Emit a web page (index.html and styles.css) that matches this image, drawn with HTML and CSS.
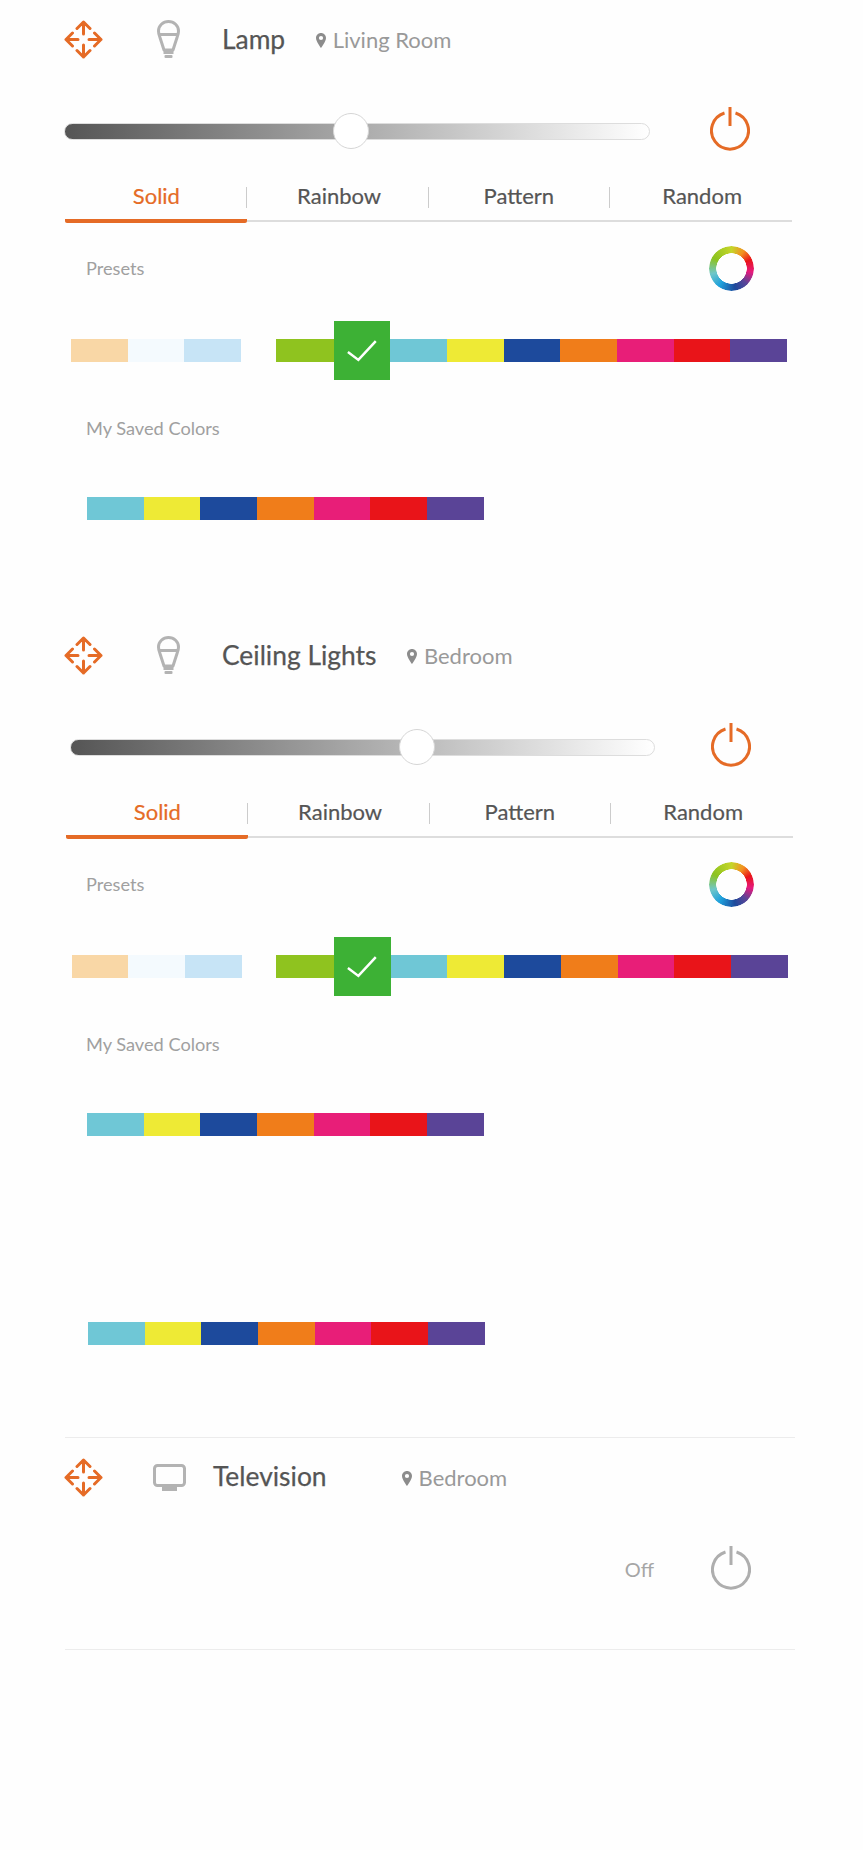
FILE: index.html
```html
<!DOCTYPE html>
<html lang="en">
<head>
    <meta charset="UTF-8">
    <meta name="viewport" content="width=device-width, initial-scale=1.0">
    <title>Devices</title>
    <link rel="stylesheet" href="styles.css">
</head>
<body>
    <svg class="icon-defs" aria-hidden="true">
        <symbol id="move" viewBox="0 0 39 39">
            <path d="M19.5 2V14M13 8.5L19.5 2L26 8.5M19.5 37V25M13 30.5L19.5 37L26 30.5M2 19.5H14M8.5 13L2 19.5L8.5 26M37 19.5H25M30.5 13L37 19.5L30.5 26" fill="none" stroke-width="3" stroke-linecap="round" stroke-linejoin="round"/>
        </symbol>
        <symbol id="bulb" viewBox="0 0 23 38">
            <path d="M7 30L2.8 17C1.8 14.5 1.5 13 1.5 11A10 9.5 0 0 1 21.5 11C21.5 13 21.2 14.5 20.2 17L16 30Z M2 14.5H21" fill="none" stroke-width="3" stroke-linejoin="round"/>
            <rect x="6.5" y="31" width="10" height="3" stroke="none"/>
            <rect x="7.5" y="35" width="8" height="3" rx="1" stroke="none"/>
        </symbol>
        <symbol id="tv" viewBox="0 0 33 27">
            <rect x="1.5" y="1.5" width="30" height="20" rx="3" fill="none" stroke-width="3"/>
            <rect x="9" y="23" width="15" height="4" stroke="none"/>
        </symbol>
        <symbol id="pin" viewBox="0 0 10 15">
            <path fill-rule="evenodd" d="M5 0C2.2 0 0 2.2 0 5C0 8.5 5 15 5 15S10 8.5 10 5C10 2.2 7.8 0 5 0ZM5 2.9A2.1 2.1 0 1 1 5 7.1A2.1 2.1 0 1 1 5 2.9Z"/>
        </symbol>
        <symbol id="power" viewBox="0 0 40 44">
            <path d="M14.5 6A18.5 18.5 0 1 0 25.5 6M20 0V19" fill="none" stroke-width="3"/>
        </symbol>
    </svg>

    <!-- lamp -->
    <section class="device device-first">
        <div class="device-head">
            <svg class="icon-move"><use href="#move"/></svg>
            <svg class="icon-bulb"><use href="#bulb"/></svg>
            <span class="device-name">Lamp</span>
            <svg class="icon-pin"><use href="#pin"/></svg>
            <span class="device-room">Living Room</span>
        </div>
        <div class="slider-row">
            <div class="slider">
                <span class="slider-thumb" style="left: 48.9%"></span>
            </div>
            <svg class="icon-power"><use href="#power"/></svg>
        </div>
        <div class="panel">
            <div class="tabs">
                <div class="tab tab-active"><span>Solid</span></div>
                <div class="tab"><span>Rainbow</span></div>
                <div class="tab"><span>Pattern</span></div>
                <div class="tab"><span>Random</span></div>
            </div>
            <div class="presets-head">
                <span class="section-label">Presets</span>
                <span class="color-ring"></span>
            </div>
            <div class="swatches preset-swatches">
                <div class="swatch-group">
                    <span class="swatch peach"></span>
                    <span class="swatch pale"></span>
                    <span class="swatch sky"></span>
                </div>
                <div class="swatch-group">
                    <span class="swatch lime"></span>
                    <span class="swatch swatch-selected">
                        <svg viewBox="0 0 57 59"><path d="M14 31L24.5 39L42 20"/></svg>
                    </span>
                    <span class="swatch cyan"></span>
                    <span class="swatch yellow"></span>
                    <span class="swatch navy"></span>
                    <span class="swatch orange"></span>
                    <span class="swatch pink"></span>
                    <span class="swatch red"></span>
                    <span class="swatch purple"></span>
                </div>
            </div>
            <div class="section-label saved-label">My Saved Colors</div>
            <div class="swatches saved-swatches">
                <span class="swatch cyan"></span>
                <span class="swatch yellow"></span>
                <span class="swatch navy"></span>
                <span class="swatch orange"></span>
                <span class="swatch pink"></span>
                <span class="swatch red"></span>
                <span class="swatch purple"></span>
            </div>
        </div>
    </section>

    <!-- ceiling lights -->
    <section class="device device-second">
        <div class="device-head">
            <svg class="icon-move"><use href="#move"/></svg>
            <svg class="icon-bulb"><use href="#bulb"/></svg>
            <span class="device-name">Ceiling Lights</span>
            <svg class="icon-pin"><use href="#pin"/></svg>
            <span class="device-room">Bedroom</span>
        </div>
        <div class="slider-row">
            <div class="slider">
                <span class="slider-thumb" style="left: 59.4%"></span>
            </div>
            <svg class="icon-power"><use href="#power"/></svg>
        </div>
        <div class="panel">
            <div class="tabs">
                <div class="tab tab-active"><span>Solid</span></div>
                <div class="tab"><span>Rainbow</span></div>
                <div class="tab"><span>Pattern</span></div>
                <div class="tab"><span>Random</span></div>
            </div>
            <div class="presets-head">
                <span class="section-label">Presets</span>
                <span class="color-ring"></span>
            </div>
            <div class="swatches preset-swatches">
                <div class="swatch-group">
                    <span class="swatch peach"></span>
                    <span class="swatch pale"></span>
                    <span class="swatch sky"></span>
                </div>
                <div class="swatch-group">
                    <span class="swatch lime"></span>
                    <span class="swatch swatch-selected">
                        <svg viewBox="0 0 57 59"><path d="M14 31L24.5 39L42 20"/></svg>
                    </span>
                    <span class="swatch cyan"></span>
                    <span class="swatch yellow"></span>
                    <span class="swatch navy"></span>
                    <span class="swatch orange"></span>
                    <span class="swatch pink"></span>
                    <span class="swatch red"></span>
                    <span class="swatch purple"></span>
                </div>
            </div>
            <div class="section-label saved-label">My Saved Colors</div>
            <div class="swatches saved-swatches">
                <span class="swatch cyan"></span>
                <span class="swatch yellow"></span>
                <span class="swatch navy"></span>
                <span class="swatch orange"></span>
                <span class="swatch pink"></span>
                <span class="swatch red"></span>
                <span class="swatch purple"></span>
            </div>
            <div class="swatches saved-swatches extra-swatches">
                <span class="swatch cyan"></span>
                <span class="swatch yellow"></span>
                <span class="swatch navy"></span>
                <span class="swatch orange"></span>
                <span class="swatch pink"></span>
                <span class="swatch red"></span>
                <span class="swatch purple"></span>
            </div>
        </div>
    </section>

    <!-- television -->
    <section class="device-tv">
        <div class="device-head">
            <svg class="icon-move"><use href="#move"/></svg>
            <svg class="icon-tv"><use href="#tv"/></svg>
            <span class="device-name">Television</span>
            <svg class="icon-pin"><use href="#pin"/></svg>
            <span class="device-room">Bedroom</span>
        </div>
        <div class="off-row">
            <span class="off-label">Off</span>
            <svg class="icon-power icon-power-off"><use href="#power"/></svg>
        </div>
    </section>
</body>
</html>
```

FILE: styles.css
```css
body {
    margin: 0;
    background-color: #fefefe;
    font-family: "Lato", "Open Sans", sans-serif;
    color: #555;
}

.icon-defs {
    display: none;
}

.device-first {
    height: 616px;
}

.device-second {
    height: 821px;
}

.device-head {
    display: flex;
    align-items: center;
    height: 78px;
    padding-left: 64px;
}

.icon-move {
    width: 39px;
    height: 39px;
    flex: none;
    stroke: #e56b26;
}

.icon-bulb {
    width: 23px;
    height: 38px;
    flex: none;
    margin-left: 54px;
    stroke: #b3b3b3;
    fill: #b3b3b3;
}

.device-name {
    margin-left: 42px;
    font-size: 26.4px;
    line-height: 30px;
    color: #555;
    -webkit-text-stroke: 0.25px #555;
}

.icon-pin {
    width: 10px;
    height: 15px;
    flex: none;
    margin-left: 30.5px;
    margin-top: 3px;
    fill: #8c8c8c;
}

.device-room {
    margin-left: 7px;
    margin-top: 2px;
    font-size: 22px;
    line-height: 26px;
    color: #999;
}

/* slider */
.slider-row {
    display: flex;
    align-items: center;
    height: 44px;
    margin-top: 29px;
    padding-left: 64px;
}

.slider {
    position: relative;
    width: 586px;
    height: 17px;
    box-sizing: border-box;
    margin-top: 4px;
    border: 1px solid #ddd;
    border-radius: 9px;
    background: linear-gradient(90deg, #555 0%, #fff 100%);
}

.slider-thumb {
    position: absolute;
    top: 50%;
    width: 36px;
    height: 36px;
    box-sizing: border-box;
    margin: -18px 0 0 -18px;
    border: 1px solid #d6d6d6;
    border-radius: 50%;
    background-color: #fff;
}

.icon-power {
    width: 40px;
    height: 44px;
    flex: none;
    margin-left: 60px;
    stroke: #e56b26;
}

.device-second .slider-row {
    padding-left: 70px;
}

.device-second .slider {
    width: 585px;
}

.device-second .icon-power {
    margin-left: 56px;
}

/* tabs */
.panel {
    margin-top: 36px;
}

.tabs {
    display: grid;
    grid-template-columns: repeat(4, 1fr);
    width: 727px;
    margin-left: 65px;
    border-bottom: 2px solid #ddd;
}

.device-second .tabs {
    margin-left: 66px;
}

.tab {
    margin-bottom: -3px;
    padding-bottom: 11px;
    border-bottom: 4px solid transparent;
    border-radius: 2px;
    font-size: 22px;
    text-align: center;
    -webkit-text-stroke: 0.2px currentColor;
}

.tab span {
    display: block;
    padding-bottom: 4px;
    border-right: 1px solid #ccc;
    line-height: 17px;
}

.tab:nth-child(1) span,
.tab:nth-child(4) span {
    padding-left: 2px;
}

.tab:nth-child(2) span {
    padding-left: 4px;
}

.tab:last-child span {
    border-right: none;
}

.tab-active {
    border-bottom-color: #e56b26;
    color: #e56b26;
}

/* colours */
.presets-head {
    display: flex;
    align-items: center;
    justify-content: space-between;
    width: 667.5px;
    height: 45px;
    margin-top: 24px;
    padding-left: 86px;
}

.section-label {
    font-size: 18.2px;
    line-height: 24px;
    color: #a0a0a0;
}

.presets-head .section-label {
    margin-bottom: 2px;
}

.color-ring {
    width: 45px;
    height: 45px;
    border-radius: 50%;
    background: conic-gradient(#c5d52a 0deg, #f39020 35deg, #e91419 65deg, #e6197d 100deg, #5a4497 135deg, #1d4a9c 170deg, #1ea0dc 215deg, #6fc7c9 255deg, #8cc31f 300deg, #c5d52a 360deg);
    -webkit-mask: radial-gradient(circle, transparent 15px, #000 15.5px);
    mask: radial-gradient(circle, transparent 15px, #000 15.5px);
}

.swatches {
    display: flex;
    height: 23px;
}

.preset-swatches {
    gap: 34.5px;
    margin-top: 48px;
    padding-left: 71px;
}

.device-second .preset-swatches {
    padding-left: 71.5px;
}

.saved-label {
    margin-top: 54px;
    padding-left: 86px;
}

.saved-swatches {
    margin-top: 57px;
    padding-left: 87px;
}

.extra-swatches {
    margin-top: 186px;
    padding-left: 88px;
}

.swatch-group {
    display: flex;
}

.swatch {
    width: 56.7px;
    height: 23px;
    flex: none;
}

.swatch-selected {
    position: relative;
    height: 59px;
    margin: -18px 0;
    background-color: #3db135;
}

.swatch-selected svg {
    display: block;
    width: 100%;
    height: 100%;
    fill: none;
    stroke: #fff;
    stroke-width: 2.5;
}

.peach { background-color: #f9d7a6; }
.pale { background-color: #f4fafe; }
.sky { background-color: #c7e4f6; }
.lime { background-color: #8fc31f; width: 58px; }
.cyan { background-color: #6fc7d6; }
.yellow { background-color: #eeea35; }
.navy { background-color: #1d4a9c; }
.orange { background-color: #f07d1a; }
.pink { background-color: #e81e78; }
.red { background-color: #e91419; }
.purple { background-color: #5a4497; }

/* television */
.device-tv {
    box-sizing: border-box;
    width: 730px;
    height: 213px;
    margin-left: 65px;
    border-top: 1px solid #ececec;
    border-bottom: 1px solid #ececec;
}

.device-tv .device-head {
    padding-left: 0;
    margin-left: -1px;
}

.icon-tv {
    width: 33px;
    height: 27px;
    flex: none;
    margin-left: 50px;
    stroke: #b3b3b3;
    fill: #b3b3b3;
}

.device-tv .device-name {
    margin-left: 27px;
    margin-bottom: 2px;
}

.device-tv .icon-pin {
    margin-left: 75px;
}

.off-row {
    display: flex;
    justify-content: flex-end;
    align-items: center;
    margin-top: 30px;
    padding-right: 44px;
}

.off-label {
    margin-top: 2px;
    font-size: 20px;
    color: #a6a6a6;
}

.icon-power-off {
    margin-left: 57px;
    stroke: #aeaeae;
}
```
